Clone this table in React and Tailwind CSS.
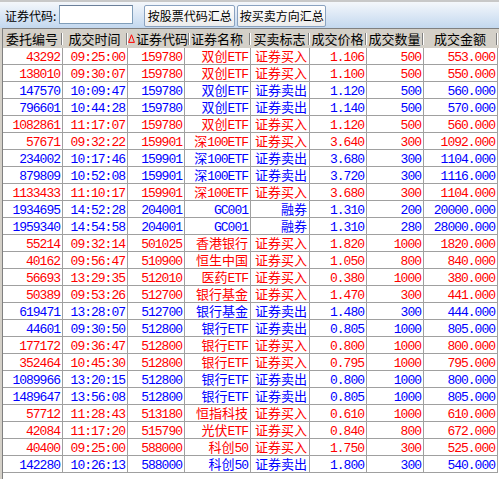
import React from 'react'

const COLS = 'grid grid-cols-[60px_65px_57px_66px_59px_57px_57px_74px]'

const rows = [
  ['43292', '09:25:00', '159780', '双创ETF', '证券买入', '1.106', '500', '553.000'],
  ['138010', '09:30:07', '159780', '双创ETF', '证券买入', '1.100', '500', '550.000'],
  ['147570', '10:09:47', '159780', '双创ETF', '证券卖出', '1.120', '500', '560.000'],
  ['796601', '10:44:28', '159780', '双创ETF', '证券卖出', '1.140', '500', '570.000'],
  ['1082861', '11:17:07', '159780', '双创ETF', '证券买入', '1.120', '500', '560.000'],
  ['57671', '09:32:22', '159901', '深100ETF', '证券买入', '3.640', '300', '1092.000'],
  ['234002', '10:17:46', '159901', '深100ETF', '证券卖出', '3.680', '300', '1104.000'],
  ['879809', '10:52:08', '159901', '深100ETF', '证券卖出', '3.720', '300', '1116.000'],
  ['1133433', '11:10:17', '159901', '深100ETF', '证券买入', '3.680', '300', '1104.000'],
  ['1934695', '14:52:28', '204001', 'GC001', '融券', '1.310', '200', '20000.000'],
  ['1959340', '14:54:58', '204001', 'GC001', '融券', '1.310', '280', '28000.000'],
  ['55214', '09:32:14', '501025', '香港银行', '证券买入', '1.820', '1000', '1820.000'],
  ['40162', '09:56:47', '510900', '恒生中国', '证券买入', '1.050', '800', '840.000'],
  ['56693', '13:29:35', '512010', '医药ETF', '证券买入', '0.380', '1000', '380.000'],
  ['50389', '09:53:26', '512700', '银行基金', '证券买入', '1.470', '300', '441.000'],
  ['619471', '13:28:07', '512700', '银行基金', '证券卖出', '1.480', '300', '444.000'],
  ['44601', '09:30:50', '512800', '银行ETF', '证券卖出', '0.805', '1000', '805.000'],
  ['177172', '09:36:47', '512800', '银行ETF', '证券买入', '0.800', '1000', '800.000'],
  ['352464', '10:45:30', '512800', '银行ETF', '证券买入', '0.795', '1000', '795.000'],
  ['1089966', '13:20:15', '512800', '银行ETF', '证券卖出', '0.800', '1000', '800.000'],
  ['1489647', '13:56:08', '512800', '银行ETF', '证券卖出', '0.805', '1000', '805.000'],
  ['57712', '11:28:43', '513180', '恒指科技', '证券买入', '0.610', '1000', '610.000'],
  ['42084', '11:17:20', '515790', '光伏ETF', '证券买入', '0.840', '800', '672.000'],
  ['40400', '09:25:00', '588000', '科创50', '证券买入', '1.750', '300', '525.000'],
  ['142280', '10:26:13', '588000', '科创50', '证券卖出', '1.800', '300', '540.000'],
]

const headers = ['委托编号', '成交时间', '证券代码', '证券名称', '买卖标志', '成交价格', '成交数量', '成交金额']

// ascii runs get the narrow mono look, chinese keeps full width
function Txt({ text }) {
  return text.split(/([\x00-\x7f]+)/).filter(Boolean).map((part, i) =>
    /^[\x00-\x7f]+$/.test(part) ? (
      <span key={i} className="font-['Liberation_Mono',monospace] tracking-[-1px]">{part}</span>
    ) : (
      <span key={i} className="font-['Noto_Sans_CJK_SC',sans-serif]">{part}</span>
    )
  )
}

function Button({ children, w }) {
  return (
    <button className={`${w} h-[22px] whitespace-nowrap rounded-[2px] border border-[#8aa2c0] bg-gradient-to-b from-[#ffffff] to-[#ececec] text-[12px] leading-none text-black`}>
      {children}
    </button>
  )
}

export default function App() {
  return (
    <div className="h-[479px] w-[499px] overflow-hidden bg-[#d4d0c8] font-['Noto_Sans_CJK_SC',sans-serif]">
      <div className="flex h-[28px] items-end border-t-2 border-[#c8c8c8] bg-gradient-to-b from-[#f4f7fb] to-[#c3d8ef] pb-px">
        <span className="mb-[5px] ml-[5px] whitespace-nowrap text-[12px] leading-none text-black">证券代码:</span>
        <div className="mb-[3px] ml-[3px] h-[19px] w-[74px] border border-[#7f9db9] border-t-[#6b7f99] bg-white" />
        <div className="ml-[11px] flex gap-[2px]">
          <Button w="w-[91px]">按股票代码汇总</Button>
          <Button w="w-[89px]">按买卖方向汇总</Button>
        </div>
      </div>

      <div className="ml-[2px] h-[451px] w-[497px] border-l border-t border-[#808080] bg-white">
        <div className={`${COLS} h-[19px] bg-[#d4d0c8]`}>
          {headers.map((h, i) => (
            <div key={h} className="flex items-center">
              <span className="flex flex-1 items-center justify-center whitespace-nowrap text-[13px] leading-[16px] text-black">
                {i === 2 && (
                  <svg width="7" height="9" viewBox="0 0 7 9" className="mr-px shrink-0">
                    <path d="M3.5 0.8 L6.4 8.4 L0.6 8.4 Z" fill="none" stroke="#ff0000" strokeWidth="1" />
                  </svg>
                )}
                {h}
              </span>
              <span className="flex h-[12px] shrink-0">
                <span className="w-px bg-[#808080]" />
                <span className="w-px bg-white" />
              </span>
            </div>
          ))}
        </div>

        {rows.map((r) => {
          const sell = r[4] === '证券卖出' || r[4] === '融券'
          const color = sell ? 'text-[#0000ff]' : 'text-[#ff0000]'
          return (
            <div key={r[0] + r[1]} className={`${COLS} ${color}`}>
              {r.map((c, i) => (
                <div
                  key={i}
                  className="h-[17px] whitespace-nowrap border-b border-r border-[#a0a0a0] pr-[2px] text-right text-[13px] leading-[16px]"
                >
                  <Txt text={c} />
                </div>
              ))}
            </div>
          )
        })}
      </div>
    </div>
  )
}
